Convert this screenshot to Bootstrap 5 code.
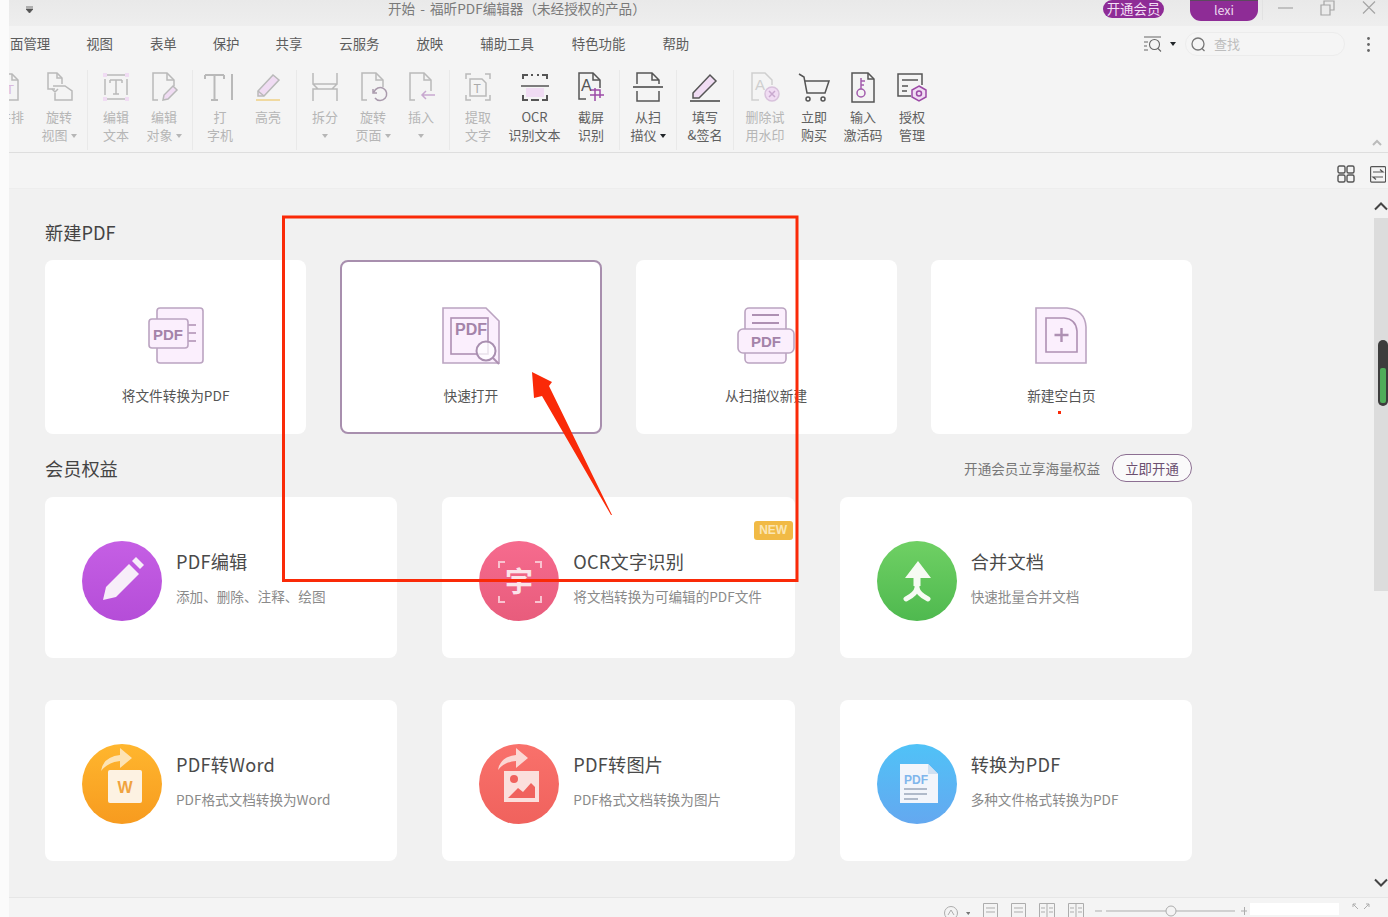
<!DOCTYPE html>
<html lang="zh-CN">
<head>
  <meta charset="UTF-8">
  <title>福昕PDF编辑器</title>
  <link href="https://cdn.jsdelivr.net/npm/bootstrap@5.3.0/dist/css/bootstrap.min.css" rel="stylesheet">
  <style>
    body { margin: 0; background: #fbfbfb; overflow: hidden; font-family: "Noto Sans CJK SC", "Liberation Sans", sans-serif; }
    .app { width: 1388px; height: 917px; padding-left: 9px; }
    svg text { font-family: "Liberation Sans", sans-serif; }

    .title-bar { height: 26px; background: linear-gradient(#e9e9e9, #eeeeee); color: #7a7a7a; font-size: 13.6px; flex: none; }
    .qa-icon { margin: 6px 0 0 17px; }
    .win-title { margin: 0 0 0 355px; line-height: 17px; white-space: nowrap; word-spacing: 2px; }
    .vip-pill { width: 61px; height: 18px; background: #8e2c96; color: #f3dff5; border-radius: 9px; font-size: 13.4px; line-height: 17px; text-align: center; }
    .user-pill { width: 68px; height: 21px; margin-left: 26px; background: #8e2c96; color: #ecd8ee; border-top: 1px solid #5c4a5e; border-radius: 0 0 11px 11px; font-size: 12.5px; line-height: 17px; text-align: center; }
    .win-btns { margin-left: 4px; padding-right: 12px; gap: 27px; height: 20px; padding-left: 15px; border-left: 1px solid #e2e2e2; }

    .menu-row { height: 36px; background: #f4f4f4; color: #5c5c5c; font-size: 13.4px; padding: 0 0 2px 1px; gap: 36px; flex: none; }
    .nudge-1 { margin-left: 1px; }
    .nudge-2 { margin-left: 2px; }
    .menu-right { margin-left: auto; margin-top: 2px; padding-right: 18px; }
    .caret-mark { display: inline-block; width: 0; height: 0; border: 3px solid transparent; border-top: 4px solid currentColor; border-bottom: 0; vertical-align: middle; margin-left: 3px; }
    .find-box { width: 160px; height: 24px; margin: 0 22px 0 9px; background: #f5f5f5; border: 1px solid #ececec; border-radius: 12px; color: #bdbdbd; font-size: 13px; padding-left: 5px; gap: 8px; }

    .ribbon { height: 91px; background: #f4f4f4; border-bottom: 1px solid #dedede; flex: none; padding-top: 8px; }
    .ribbon-in { margin-left: -22px; }
    .tool { width: 48px; flex: none; text-align: center; font-size: 13px; line-height: 18px; color: #606060; white-space: nowrap; }
    .tool svg { display: block; margin: 0 auto 4px; fill: none; stroke: #555; stroke-width: 1.5; }
    .tool.off { color: #b6b6b6; }
    .tool.off svg { stroke: #b9b9b9; }
    .tool.wide { width: 65px; }
    .tool.mid { width: 50px; }
    .rb-sep { width: 9px; flex: none; position: relative; }
    .rb-sep::after { content: ""; position: absolute; left: 4px; top: 0; height: 80px; width: 1px; background: #e9e9e9; }
    .rb-sep.narrow { width: 8px; }
    .rb-sep.broad { width: 11px; }
    .collapse-up { margin-left: auto; align-self: flex-end; margin-right: 6px; margin-bottom: 6px; }
    .pink-fill { fill: #f0dcf3; }
    .no-line { stroke: none !important; }

    .sub-bar { height: 36px; background: #f4f4f4; border-bottom: 1px solid #ededed; padding: 7px 2px 0 0; gap: 15px; flex: none; }

    .main-area { height: 708px; background: #f1f1f1; flex: none; }
    .page-scroll { width: 1365px; padding: 29px 0 0 36px; }
    .sec-head { width: 1147px; height: 28px; font-size: 18.2px; line-height: 28px; color: #444; }
    .new-grid { display: grid; width: 1147px; grid-template-columns: repeat(4, 1fr); column-gap: 34px; margin-top: 14px; margin-bottom: 20px; }
    .tile { height: 174px; background: #fff; border-radius: 8px; text-align: center; font-size: 13.7px; color: #555; padding-top: 47px; }
    .tile.picked { border: 2px solid #a88fae; padding-top: 45px; }
    .tile svg { display: block; margin: 0 auto 20px; }
    .tile-ico { fill: #fbeffd; stroke: #bba4c1; stroke-width: 1.6; }
    .tile-ico text { fill: #a483a9; stroke: none; font-weight: 700; }
    .tile-ico .lines { stroke: #ae90b3; fill: none; }
    .vip-note { font-size: 13.6px; color: #777; gap: 12px; }
    .open-btn { width: 80px; height: 28px; border: 1px solid #8c6f92; border-radius: 14px; background: #fafafa; color: #6b4f70; font-size: 13.4px; line-height: 26px; text-align: center; }
    .vip-grid { display: grid; width: 1147px; grid-template-columns: repeat(3, 1fr); column-gap: 45px; row-gap: 42px; margin-top: 15px; }
    .feat { height: 161px; background: #fff; border-radius: 8px; padding: 44px 20px 0 37px; gap: 14px; }
    .feat-name { font-size: 18.2px; line-height: 26px; color: #4a4a4a; margin: 7px 0 12px; white-space: nowrap; letter-spacing: .2px; }
    .feat-desc { font-size: 13.6px; line-height: 20px; color: #8a8a8a; white-space: nowrap; }
    .new-tag { position: absolute; top: 24px; right: 2px; width: 39px; height: 19px; background: #f1ba45; color: #fbe6b4; border-radius: 3px; font-family: "Liberation Sans", sans-serif; font-weight: 700; font-size: 12px; line-height: 19px; text-align: center; }

    .v-scroll { width: 14px; flex: none; }
    .v-track { position: absolute; left: 0; right: 0; top: 29px; height: 373px; background: #dcdcdc; }
    .v-thumb { position: absolute; left: 4px; right: 0; top: 151px; height: 66px; background: #3d3d3d; border-radius: 5px; }
    .v-grip { position: absolute; left: 2px; right: 2px; top: 28px; height: 35px; background: #4fae5a; border-radius: 2px; }
    .chev-up { position: absolute; left: 0; top: 13px; }
    .chev-down { position: absolute; left: 0; bottom: 10px; }

    .status-bar { height: 20px; background: #f4f4f4; border-top: 1px solid #e6e6e6; overflow: hidden; flex: none; padding-top: 5px; padding-left: 935px; gap: 13px; color: #a9a9a9; }
    .status-bar svg { fill: none; stroke: #adadad; flex: none; }
    .zoom-gauge { margin: -1px 0 0 -2px; }
    .zoom-input { width: 89px; height: 12px; background: #fff; margin-left: -10px; flex: none; }
    .annotate { position: absolute; left: 0; top: 0; pointer-events: none; }
  </style>
</head>
<body>
  <div class="app position-relative overflow-hidden d-flex flex-column">

    <div class="title-bar d-flex">
      <svg class="qa-icon" width="7" height="9" viewBox="0 0 7 9"><path d="M0 1h7M0 3h7L3.500 7z" fill="#555" stroke="#555" stroke-width=".8"/></svg>
      <p class="win-title">开始 - 福昕PDF编辑器（未经授权的产品）</p>
      <div class="d-flex ms-auto">
        <div class="vip-pill">开通会员</div>
        <div class="user-pill">lexi</div>
        <div class="win-btns d-flex">
          <svg width="15" height="16" viewBox="0 0 15 16"><path d="M0 8h15" stroke="#a5a5a5" stroke-width="1.2"/></svg>
          <svg width="15" height="16" viewBox="0 0 15 16" fill="none" stroke="#a5a5a5" stroke-width="1.2"><path d="M1 5h9v10H1zM4 5V1h10v9h-4"/></svg>
          <svg width="14" height="16" viewBox="0 0 14 16"><path d="M1 1.500l12 12M13 1.500l-12 12" stroke="#a5a5a5" stroke-width="1.2"/></svg>
        </div>
      </div>
    </div>

    <div class="menu-row d-flex align-items-center">
      <span>面管理</span><span>视图</span><span class="nudge-1">表单</span><span>保护</span><span>共享</span><span class="nudge-1">云服务</span><span class="nudge-1">放映</span><span class="nudge-1">辅助工具</span><span class="nudge-2">特色功能</span><span class="nudge-1">帮助</span>
      <div class="menu-right d-flex align-items-center">
        <svg width="19" height="16" viewBox="0 0 19 16" fill="none" stroke="#666" stroke-width="1.100"><path d="M1 1h17M1 6h4M1 10h3M1 14h4"/><circle cx="11.500" cy="8.500" r="5"/><path d="M15 12.500l3 3"/></svg>
        <span class="caret-mark text-dark ms-2"></span>
        <div class="find-box d-flex align-items-center">
          <svg width="15" height="15" viewBox="0 0 15 15" fill="none" stroke="#777" stroke-width="1.300"><circle cx="7" cy="7" r="6"/><path d="M11 11.500l2.500 2.500"/></svg>
          <span>查找</span>
        </div>
        <svg width="3" height="15" viewBox="0 0 3 15" fill="#666"><circle cx="1.500" cy="1.500" r="1.400"/><circle cx="1.500" cy="7.500" r="1.400"/><circle cx="1.500" cy="13.500" r="1.400"/></svg>
      </div>
    </div>

    <div class="ribbon d-flex overflow-hidden">
      <div class="ribbon-in d-flex">
        <div class="tool off"><svg width="34" height="34" viewBox="0 0 34 34"><path d="M9 4h9l6 6v20H9z"/><path d="M18 4v6h6"/><text x="12" y="24" font-size="13" fill="#d9b8dd" stroke="none">T</text></svg>并排</div>
        <div class="tool off"><svg width="34" height="34" viewBox="0 0 34 34"><path d="M13 19H6V3h9l5 5v6"/><path d="M15 3v5h5"/><path d="M11 16h12l7 5v9H13V23"/><path d="M16 19l-3 3-3-3" /></svg>旋转<br>视图<span class="caret-mark"></span></div>
        <div class="rb-sep"></div>
        <div class="tool off"><svg width="34" height="34" viewBox="0 0 34 34"><path d="M8 5h18M8 29h18M6 9v16M28 9v16"/><path class="pink-fill no-line" d="M4 3h4v4H4zM26 3h4v4h-4zM4 27h4v4H4zM26 27h4v4h-4z"/><path d="M11 10h12M17 10v14M14 24h6M11 10v3M23 10v3"/></svg>编辑<br>文本</div>
        <div class="tool off"><svg width="34" height="34" viewBox="0 0 34 34"><path d="M11 30H6V3h14l7 7v6"/><path d="M20 3v7h7"/><path class="pink-fill" d="M16 30l1-5 9-9 4 4-9 9z"/></svg>编辑<br>对象<span class="caret-mark"></span></div>
        <div class="rb-sep narrow"></div>
        <div class="tool off"><svg width="34" height="34" viewBox="0 0 34 34"><path d="M2 5h19M11.500 5v25M8 30h7M2 5v4M21 5v4M29 4v26" stroke-width="2"/></svg>打<br>字机</div>
        <div class="tool off"><svg width="34" height="34" viewBox="0 0 34 34"><path class="pink-fill" d="M7 21L22 5l6 5-15 16H7z"/><path d="M7 21l6 5"/><path d="M5 30h24" stroke="#f0d9a0" stroke-width="2"/></svg>高亮</div>
        <div class="rb-sep"></div>
        <div class="tool off"><svg width="34" height="34" viewBox="0 0 34 34"><path d="M5 3v11h24V3M5 31V19h24v12M5 14l5 5M29 14l-5 5" /></svg>拆分<br><span class="caret-mark m-0"></span></div>
        <div class="tool off"><svg width="34" height="34" viewBox="0 0 34 34"><path d="M11 30H6V3h14l7 7v7"/><path d="M20 3v7h7"/><path d="M18 22a6.500 6.500 0 1 1 1 6M17 19v4h4" stroke="#a99aac"/></svg>旋转<br>页面<span class="caret-mark"></span></div>
        <div class="tool off"><svg width="34" height="34" viewBox="0 0 34 34"><path d="M11 30H6V3h14l7 7v11"/><path d="M20 3v7h7"/><path d="M31 25H18M22 21l-4 4 4 4" stroke="#c8a8d0"/></svg>插入<br><span class="caret-mark m-0"></span></div>
        <div class="rb-sep"></div>
        <div class="tool off"><svg width="34" height="34" viewBox="0 0 34 34"><path d="M10 4H5v5M24 4h5v5M10 30H5v-5M24 30h5v-5"/><path d="M9 9h12l4 4v13H9z"/><text x="12.500" y="23" font-size="12" fill="#aaa" stroke="none">T</text></svg>提取<br>文字</div>
        <div class="tool wide"><svg width="34" height="34" viewBox="0 0 34 34"><path d="M5 9V5h5M29 9V5h-5M5 25v5h5M29 25v5h-5M13 5h2M19 5h2M13 30h8" stroke-width="2"/><path class="pink-fill no-line" d="M8 18h18v9H8z"/><path d="M3 16h28"/></svg>OCR<br>识别文本</div>
        <div class="tool"><svg width="34" height="34" viewBox="0 0 34 34"><path d="M12 29H5V3h14l7 7v8"/><path d="M19 3v7h7"/><text x="7" y="21" font-size="16" fill="#555" stroke="none">A</text><path d="M21 18v13M16 25h14M17 20h9v8" stroke="#9c4aa6"/></svg>截屏<br>识别</div>
        <div class="rb-sep"></div>
        <div class="tool"><svg width="34" height="34" viewBox="0 0 34 34"><path d="M6 14V3h15l7 7v4M21 3v7h7"/><path d="M2 17h30" stroke-width="1.700"/><path d="M6 21v10h22V21"/></svg>从扫<br>描仪<span class="caret-mark text-dark"></span></div>
        <div class="rb-sep"></div>
        <div class="tool"><svg width="34" height="34" viewBox="0 0 34 34"><path class="pink-fill" d="M5 23L22 5l6 6-17 17H5z"/><path d="M2 31h30" stroke-width="1.700"/></svg>填写<br>&amp;签名</div>
        <div class="rb-sep broad"></div>
        <div class="tool mid off"><svg width="34" height="34" viewBox="0 0 34 34"><path d="M11 30H4V3h13l7 7v5" stroke="#cfcfcf"/><text x="7" y="20" font-size="15" fill="#cfcfcf" stroke="none">A</text><circle class="pink-fill" cx="24" cy="24" r="7" stroke="#d8c2dc"/><path d="M21 21l6 6M27 21l-6 6" stroke="#c9a9cf"/></svg>删除试<br>用水印</div>
        <div class="tool"><svg width="34" height="34" viewBox="0 0 34 34"><path d="M2 4l5 3 3 16h18l4-12H8"/><circle cx="11" cy="29" r="2"/><circle cx="26" cy="29" r="2"/></svg>立即<br>购买</div>
        <div class="tool mid"><svg width="34" height="34" viewBox="0 0 34 34"><path d="M6 3h16l6 6v23H6z"/><path d="M22 3v6h6"/><circle cx="15" cy="23" r="4" stroke="#a25cad"/><path d="M15 19V8M15 11h4M15 15h3" stroke="#a25cad"/></svg>输入<br>激活码</div>
        <div class="tool"><svg width="34" height="34" viewBox="0 0 34 34"><path d="M16 26H3V4h24v11"/><path d="M7 10h16M7 16h6M7 21h5"/><path class="pink-fill" d="M24 16l7 4v7l-7 4-7-4v-7z" stroke="#9c4aa6"/><circle cx="24" cy="23.500" r="2.500" stroke="#9c4aa6"/></svg>授权<br>管理</div>
      </div>
      <svg class="collapse-up" width="10" height="7" viewBox="0 0 10 7"><path d="M1 6l4-4 4 4" fill="none" stroke="#bbb" stroke-width="2"/></svg>
    </div>

    <div class="sub-bar d-flex align-items-center justify-content-end">
      <svg width="18" height="18" viewBox="0 0 18 18" fill="none" stroke="#555" stroke-width="1.400"><rect x="1" y="1" width="7" height="7" rx="1.500"/><rect x="10" y="1" width="7" height="7" rx="1.500"/><rect x="1" y="10" width="7" height="7" rx="1.500"/><rect x="10" y="10" width="7" height="7" rx="1.500"/></svg>
      <svg width="16" height="17" viewBox="0 0 16 17" fill="none" stroke="#555" stroke-width="1.200"><rect x=".6" y=".6" width="15" height="15.500" rx="1"/><path d="M3 6h10l-3-2.500M13 11H3l3 2.500"/></svg>
    </div>

    <div class="main-area d-flex">
      <div class="page-scroll">
        <div class="sec-head">新建PDF</div>
        <div class="new-grid">
          <div class="tile">
            <svg class="tile-ico" width="58" height="58" viewBox="0 0 58 58"><rect x="10" y="1" width="46" height="55" rx="3"/><path class="lines" d="M41 18h8M41 26h8M41 34h8"/><rect x="2" y="12" width="39" height="29" rx="3"/><text x="6" y="32.500" font-size="15">PDF</text></svg>
            将文件转换为PDF
          </div>
          <div class="tile picked">
            <svg class="tile-ico" width="58" height="58" viewBox="0 0 58 58"><path d="M1 1h43l13 13v42H1z"/><rect class="lines" x="9" y="11" width="37" height="36"/><text x="13" y="28" font-size="16">PDF</text><circle cx="44" cy="44" r="9.500" fill="#fff" fill-opacity=".75" stroke="#a98fb0" stroke-width="2"/><path class="lines" d="M51 51l6 6" stroke-width="2"/></svg>
            快速打开
          </div>
          <div class="tile">
            <svg class="tile-ico" width="58" height="58" viewBox="0 0 58 58"><rect x="8" y="1" width="41" height="55" rx="4"/><path class="lines" d="M15 8h27M15 16h27" stroke-width="2"/><rect x="1" y="22" width="56" height="24" rx="5"/><text x="14" y="39.500" font-size="15">PDF</text></svg>
            从扫描仪新建
          </div>
          <div class="tile">
            <svg class="tile-ico" width="58" height="58" viewBox="0 0 58 58"><path d="M4 1h31q18 2 19 19v36H4z"/><path class="lines" d="M14 11h18q12 1 13 13v21H14z"/><path class="lines" d="M29.500 21v14M22.500 28h14" stroke-width="2.400"/></svg>
            新建空白页
          </div>
        </div>

        <div class="sec-head d-flex justify-content-between">
          <span>会员权益</span>
          <div class="vip-note d-flex align-items-center"><span>开通会员立享海量权益</span><div class="open-btn">立即开通</div></div>
        </div>

        <div class="vip-grid">
          <div class="feat d-flex">
            <svg width="80" height="80" viewBox="0 0 80 80"><defs><linearGradient id="gp" x1="0" y1="0" x2="0" y2="1"><stop offset="0" stop-color="#c55fe4"/><stop offset="1" stop-color="#b54dd8"/></linearGradient></defs><circle cx="40" cy="40" r="40" fill="url(#gp)"/><path d="M21 59l3-13L47 23l10 10L34 56z" fill="#f7eef9"/><path d="M50 20l4-4 8 8-4 4z" fill="#f7eef9"/></svg>
            <div><div class="feat-name">PDF编辑</div><div class="feat-desc">添加、删除、注释、绘图</div></div>
          </div>
          <div class="feat d-flex position-relative">
            <svg width="80" height="80" viewBox="0 0 80 80"><defs><linearGradient id="gr" x1="0" y1="0" x2="0" y2="1"><stop offset="0" stop-color="#f66b8e"/><stop offset="1" stop-color="#e85c7c"/></linearGradient></defs><circle cx="40" cy="40" r="40" fill="url(#gr)"/><path d="M20 27v-6h6M62 27v-6h-6M20 55v6h6M62 55v6h-6" fill="none" stroke="#f9c3d0" stroke-width="2"/><text x="40" y="51" text-anchor="middle" font-size="28" font-weight="700" fill="#fbe4ea" style="font-family:'Noto Sans CJK SC',sans-serif">字</text></svg>
            <div><div class="feat-name">OCR文字识别</div><div class="feat-desc">将文档转换为可编辑的PDF文件</div></div>
            <div class="new-tag">NEW</div>
          </div>
          <div class="feat d-flex">
            <svg width="80" height="80" viewBox="0 0 80 80"><defs><linearGradient id="gg" x1="0" y1="0" x2="0" y2="1"><stop offset="0" stop-color="#6fd064"/><stop offset="1" stop-color="#4fb94f"/></linearGradient></defs><circle cx="40" cy="40" r="40" fill="url(#gg)"/><path d="M41 20L28 37h8.500v8h7v-8H54z" fill="#f6fbf3"/><path d="M40 42v5q-1 6-11 11M40 42v5q1 6 11 11" fill="none" stroke="#f6fbf3" stroke-width="5" stroke-linecap="round"/></svg>
            <div><div class="feat-name">合并文档</div><div class="feat-desc">快速批量合并文档</div></div>
          </div>
          <div class="feat d-flex">
            <svg width="80" height="80" viewBox="0 0 80 80"><defs><linearGradient id="go" x1="0" y1="0" x2="0" y2="1"><stop offset="0" stop-color="#ffb62e"/><stop offset="1" stop-color="#f79b1f"/></linearGradient></defs><circle cx="40" cy="40" r="40" fill="url(#go)"/><path d="M19 27q2-14 19-16V4l12 10-12 10v-7q-12 1-19 10z" fill="#fde3b4"/><rect x="26" y="26" width="34" height="33" rx="2" fill="#fdf2e2"/><text x="43" y="49" text-anchor="middle" font-size="16" font-weight="700" fill="#f0a33f">W</text></svg>
            <div><div class="feat-name">PDF转Word</div><div class="feat-desc">PDF格式文档转换为Word</div></div>
          </div>
          <div class="feat d-flex">
            <svg width="80" height="80" viewBox="0 0 80 80"><defs><linearGradient id="gs" x1="0" y1="0" x2="0" y2="1"><stop offset="0" stop-color="#f9716b"/><stop offset="1" stop-color="#f0625d"/></linearGradient></defs><circle cx="40" cy="40" r="40" fill="url(#gs)"/><path d="M19 26q2-13 18-15V4l12 10-12 10v-7q-12 1-18 9z" fill="#fbd8d4"/><rect x="25" y="27" width="35" height="31" fill="#fbdfdc"/><circle cx="35" cy="35" r="4" fill="#f0625d"/><path d="M29 54l10-10 5 4 8-9 4 4v11z" fill="#f0625d"/></svg>
            <div><div class="feat-name">PDF转图片</div><div class="feat-desc">PDF格式文档转换为图片</div></div>
          </div>
          <div class="feat d-flex">
            <svg width="80" height="80" viewBox="0 0 80 80"><defs><linearGradient id="gb" x1="0" y1="0" x2="0" y2="1"><stop offset="0" stop-color="#50c2f7"/><stop offset="1" stop-color="#64a8f0"/></linearGradient></defs><circle cx="40" cy="40" r="40" fill="url(#gb)"/><path d="M23 20h28l10 10v29H23z" fill="#f2f5fb"/><path d="M51 20l10 10H51z" fill="#cfe0f2"/><text x="27" y="40" font-size="12" font-weight="700" fill="#7fb6ec">PDF</text><path d="M27 45h23M27 50h23M27 55h14" stroke="#9aa6bb" stroke-width="1.500"/></svg>
            <div><div class="feat-name">转换为PDF</div><div class="feat-desc">多种文件格式转换为PDF</div></div>
          </div>
        </div>
      </div>
      <div class="v-scroll position-relative ms-auto">
        <div class="v-track"></div>
        <div class="v-thumb"><div class="v-grip"></div></div>
        <svg class="chev-up" width="14" height="9" viewBox="0 0 14 9"><path d="M1 7.500l6-6 6 6" fill="none" stroke="#444" stroke-width="2"/></svg>
        <svg class="chev-down" width="14" height="9" viewBox="0 0 14 9"><path d="M1 1.500l6 6 6-6" fill="none" stroke="#444" stroke-width="2"/></svg>
      </div>
    </div>

    <div class="status-bar d-flex align-items-start">
      <svg width="26" height="16" viewBox="0 0 26 16"><circle cx="7" cy="10" r="6.500"/><path d="M4 12l3-5 3 5"/><path d="M22 9h4.500l-2.200 3z" fill="#777" stroke="none"/></svg>
      <svg width="15" height="16" viewBox="0 0 15 16"><path d="M.5.500h14v15H.5zM3 5h9M3 9h9"/></svg>
      <svg width="15" height="16" viewBox="0 0 15 16"><path d="M.5.500h14v15H.5zM3 5h9M3 9h9"/></svg>
      <svg width="16" height="16" viewBox="0 0 16 16"><path d="M.5.500h15v15H.5zM8 .5v15M2 5h4M10 5h4M2 9h4M10 9h4"/></svg>
      <svg width="16" height="16" viewBox="0 0 16 16"><path d="M.5.500h15v15H.5zM8 .5v15M2 5h4M10 5h4M2 9h4M10 9h4"/></svg>
      <svg class="zoom-gauge" width="152" height="16" viewBox="0 0 152 16"><path d="M0 9h7M11 9h129M146 9h7M149.500 5v8"/><circle cx="76" cy="9" r="5" fill="#f4f4f4"/></svg>
      <div class="zoom-input"></div>
      <svg width="18" height="9" viewBox="0 0 18 9"><path d="M1 1l5 5M1 1h3M1 1v3M17 1l-5 5M17 1h-3M17 1v3"/></svg>
    </div>

    <svg class="annotate" width="1388" height="917" viewBox="0 0 1388 917">
      <rect x="283.500" y="217" width="513.500" height="363.500" fill="none" stroke="#fa2a08" stroke-width="3"/>
      <path d="M532 372l20 10-3 4 63 129-1 0-69-119-8 2z" fill="#fa2a08"/>
      <rect x="1058" y="411" width="3" height="3" fill="#fa2a08"/>
    </svg>
  </div>
  <script src="https://cdn.jsdelivr.net/npm/bootstrap@5.3.0/dist/js/bootstrap.bundle.min.js"></script>
</body>
</html>
